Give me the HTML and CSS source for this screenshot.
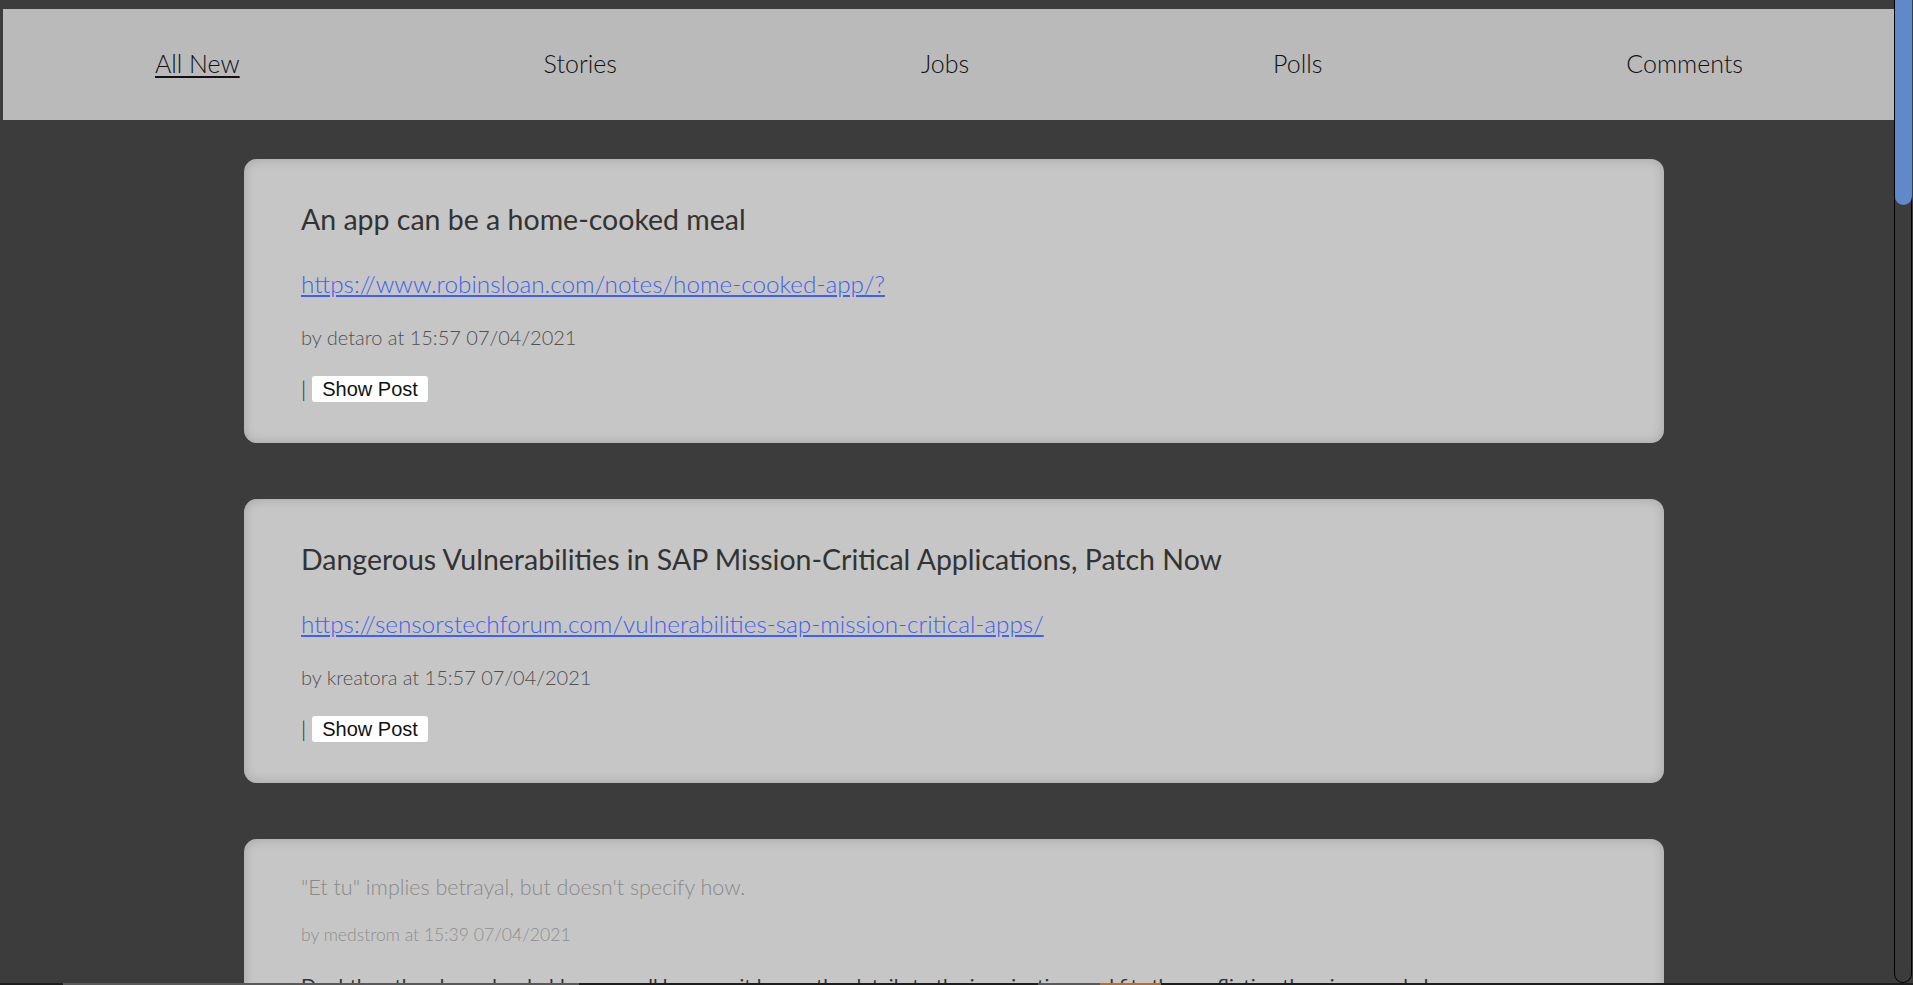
FILE: index.html
```html
<!DOCTYPE html>
<html lang="en">
<head>
<meta charset="utf-8">
<title>HN New</title>
<link rel="stylesheet" href="styles.css">
</head>
<body>
<div class="page">
  <nav class="nav">
    <a class="nav-link active" href="#">All New</a>
    <a class="nav-link" href="#">Stories</a>
    <a class="nav-link" href="#">Jobs</a>
    <a class="nav-link" href="#">Polls</a>
    <a class="nav-link" href="#">Comments</a>
  </nav>
  <main class="feed">
    <article class="card">
      <h2 class="card-title">An app can be a home-cooked meal</h2>
      <a class="card-url" href="#">https://www.robinsloan.com/notes/home-cooked-app/?</a>
      <p class="card-meta">by detaro at 15:57 07/04/2021</p>
      <div class="card-actions"><span class="pipe">|</span><button class="btn" type="button">Show Post</button></div>
    </article>
    <article class="card">
      <h2 class="card-title">Dangerous Vulnerabilities in SAP Mission-Critical Applications, Patch Now</h2>
      <a class="card-url" href="#">https://sensorstechforum.com/vulnerabilities-sap-mission-critical-apps/</a>
      <p class="card-meta">by kreatora at 15:57 07/04/2021</p>
      <div class="card-actions"><span class="pipe">|</span><button class="btn" type="button">Show Post</button></div>
    </article>
    <article class="card comment">
      <p class="comment-parent">"Et tu" implies betrayal, but doesn't specify how.</p>
      <p class="comment-meta">by medstrom at 15:39 07/04/2021</p>
      <p class="comment-body">Doubtless the phrase has held up so well because it leaves the details to the imagination, and fits the conflicting theories people have.</p>
    </article>
  </main>
</div>
<div class="scrollbar"><div class="scroll-thumb"></div></div>
<div class="taskbar">
  <span class="tb-seg tb-dark w63"></span>
  <span class="tb-seg tb-gray w516"></span>
  <span class="tb-seg tb-dark w459"></span>
  <span class="tb-seg tb-gray w62"></span>
  <span class="tb-seg tb-orange w61"></span>
  <span class="tb-seg tb-dark tb-fill"></span>
</div>
</body>
</html>
```
FILE: styles.css
```css
* { box-sizing: border-box; }
html, body {
  margin: 0;
  padding: 0;
  height: 100%;
  overflow: hidden;
  background: #3c3c3c;
}
body {
  font-family: Lato, "Noto Sans", "Liberation Sans", sans-serif;
  color: #333;
}
.page {
  width: 1895px;
  padding-top: 9px;
}
.nav {
  margin-left: 3px;
  width: 1892px;
  height: 111px;
  padding-bottom: 4px;
  background: #bababa;
  display: flex;
  justify-content: space-around;
  align-items: center;
}
.nav-link {
  font-size: 25px;
  font-weight: 300;
  color: #111;
  text-decoration: none;
}
.nav-link.active {
  text-decoration: underline;
  text-underline-offset: 3px;
}
.feed {
  width: 1420px;
  margin: 39px 0 0 244px;
  display: flex;
  flex-direction: column;
  gap: 56px;
}
.card {
  background: #c6c6c6;
  border-radius: 13px;
  box-shadow: inset 0 0 10px 2px rgba(0, 0, 0, 0.13);
  padding: 43px 57px 41px;
  display: flex;
  flex-direction: column;
  align-items: flex-start;
}
.card-title {
  margin: 0;
  font-size: 28.5px;
  line-height: 34px;
  font-weight: 400;
  color: #333;
}
.card-url {
  margin-top: 33px;
  font-size: 24.3px;
  line-height: 30px;
  font-weight: 300;
  color: #3f60f0;
  text-decoration: underline;
  text-underline-offset: 2px;
}
.card-meta {
  margin: 26px 0 0;
  font-size: 20px;
  line-height: 24px;
  font-weight: 300;
  color: #505050;
}
.card-actions {
  margin-top: 27px;
  display: flex;
  align-items: center;
  height: 26px;
}
.pipe {
  font-size: 22px;
  line-height: 26px;
  font-weight: 300;
  color: #222;
}
.btn {
  margin-left: 6px;
  height: 26px;
  padding: 0 10px;
  border: none;
  border-radius: 3px;
  background: #fff;
  color: #111;
  font-family: "Liberation Sans", Arial, sans-serif;
  font-size: 20px;
  line-height: 23px;
}
.comment {
  padding-top: 36px;
}
.comment-parent {
  margin: 0;
  font-size: 21.5px;
  line-height: 24px;
  font-weight: 300;
  color: #8a8a8a;
}
.comment-meta {
  margin: 26px 0 0;
  font-size: 17.6px;
  line-height: 20px;
  font-weight: 300;
  color: #8e8e8e;
}
.comment-body {
  margin: 28px 0 0;
  font-size: 20px;
  line-height: 24px;
  color: #333;
}
.scrollbar {
  position: fixed;
  top: -10px;
  right: 1px;
  width: 18px;
  height: 993px;
  border: 1px solid #000;
  border-radius: 9px;
  background: #3c3c3c;
}
.scroll-thumb {
  position: absolute;
  top: 0;
  left: 0;
  right: -1px;
  height: 214px;
  background: #6089c9;
  border-radius: 9px;
}
.taskbar {
  position: fixed;
  left: 0;
  bottom: 0;
  width: 100%;
  height: 2px;
  display: flex;
}
.tb-seg { display: block; height: 2px; }
.tb-dark { background: #1e1e1e; }
.tb-gray { background: #5a5a5a; }
.tb-orange { background: #c26a26; }
.w63 { width: 63px; }
.w516 { width: 516px; }
.w459 { width: 459px; }
.w62 { width: 62px; }
.w61 { width: 61px; }
.tb-fill { flex: 1; }
```
